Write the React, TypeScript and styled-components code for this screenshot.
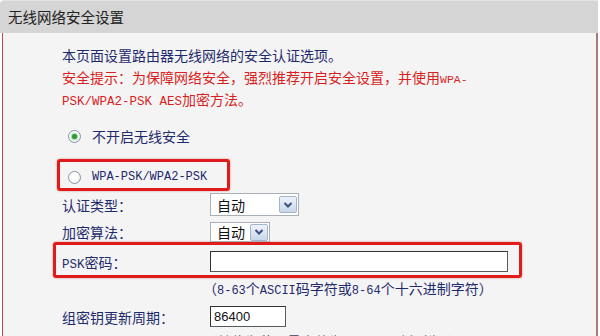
import React from "react";
import styled, { createGlobalStyle } from "styled-components";

const GlobalStyle = createGlobalStyle`
  html, body {
    margin: 0;
    padding: 0;
    background: #ffffff;
    overflow: hidden;
  }
  body {
    font-family: "Noto Sans CJK SC", "DejaVu Sans", sans-serif;
  }
`;

const Page = styled.div`
  width: 600px;
  height: 336px;
  overflow: hidden;
  background: #ffffff;
`;

const Header = styled.div`
  height: 33px;
  width: 598px;
  display: flex;
  align-items: center;
  padding-left: 8px;
  box-sizing: border-box;
  background: #d5d5d5;
  border-top: 1px solid #e4e4e4;
  border-top-left-radius: 4px;
  font-size: 14.5px;
  color: #222222;
  line-height: 1;
`;

const Body = styled.div`
  margin-left: 2px;
  width: 596px;
  box-sizing: border-box;
  min-height: 310px;
  background: #f4f4f4;
  border-left: 1px solid #c24a4a;
  border-right: 2px solid #a87a7a;
  padding: 11px 0 0 59px;
`;

const Intro = styled.div`
  font-size: 14px;
`;

const Line = styled.div<{ $red?: boolean }>`
  height: 22px;
  line-height: 22px;
  color: ${({ $red }) => ($red ? "#d81e1e" : "#1f2a6c")};
  white-space: nowrap;
`;

const Mono = styled.span<{ $size?: number }>`
  font-family: "Liberation Mono", "DejaVu Sans Mono", monospace;
  font-size: ${({ $size }) => $size ?? 12.5}px;
  line-height: 1;
`;

const RadioRow = styled.label`
  display: flex;
  align-items: center;
  height: 22px;
  gap: 11px;
  font-size: 14px;
  color: #1f2a6c;
  white-space: nowrap;
`;

const FirstRadio = styled(RadioRow)`
  margin-top: 15px;
  padding-left: 6px;
`;

const Highlight = styled.div<{ $left: number; $width: number }>`
  margin-left: -${({ $left }) => $left}px;
  width: ${({ $width }) => $width}px;
  box-sizing: border-box;
  border: 3px solid #e01b1b;
  border-radius: 3px;
  box-shadow: 0 0 2px rgba(200, 20, 20, 0.5);
`;

const RadioBox = styled(Highlight)`
  margin-top: 12px;
  height: 32px;
  padding: 4px 0 0 8px;
`;

const Radio = styled.span<{ $checked?: boolean }>`
  width: 13px;
  height: 13px;
  border-radius: 50%;
  box-sizing: border-box;
  border: 1px solid #8494a4;
  background: radial-gradient(circle at 40% 35%, #ffffff 40%, #dfe3e8 100%);
  display: flex;
  align-items: center;
  justify-content: center;
  flex-shrink: 0;

  &::after {
    content: "";
    display: ${({ $checked }) => ($checked ? "block" : "none")};
    width: 5px;
    height: 5px;
    border-radius: 50%;
    background: #2e9a34;
    box-shadow: 0 0 1px 1px #9fd49f;
  }
`;

const FormRow = styled.div<{ $top?: number }>`
  display: grid;
  grid-template-columns: 148px auto;
  align-items: center;
  margin-top: ${({ $top }) => $top ?? 0}px;
`;

const Label = styled.div`
  font-size: 14px;
  line-height: 20px;
  height: 20px;
  color: #1f2a6c;
  white-space: nowrap;
`;

const SelectBox = styled.div<{ $width: number; $height: number }>`
  width: ${({ $width }) => $width}px;
  height: ${({ $height }) => $height}px;
  box-sizing: border-box;
  background: #ffffff;
  border: 1px solid #a9b0b8;
  display: flex;
  align-items: center;
  justify-content: space-between;
  padding: 0 1px 0 6px;
  font-size: 14px;
  color: #111111;
`;

const ArrowButton = styled.span`
  width: 18px;
  height: 17px;
  box-sizing: border-box;
  border: 1px solid #a4b4cc;
  border-radius: 2px;
  background: linear-gradient(#eef3fb, #c9d7ea);
  display: flex;
  align-items: center;
  justify-content: center;
`;

const PskBox = styled(Highlight)`
  height: 36px;
  padding: 6px 0 0 6px;
`;

const TextInput = styled.div<{ $width: number }>`
  width: ${({ $width }) => $width}px;
  height: 21px;
  box-sizing: border-box;
  background: #ffffff;
  border: 1px solid #555a5e;
  border-top-color: #2f3336;
  border-left-color: #2f3336;
  font-family: "Liberation Sans", Arial, sans-serif;
  font-size: 13px;
  line-height: 19px;
  padding-left: 3px;
  color: #111111;
`;

const Hint = styled.div<{ $gray?: boolean }>`
  grid-column: 2;
  margin-left: -7px;
  height: 20px;
  line-height: 20px;
  font-size: 14px;
  color: ${({ $gray }) => ($gray ? "#3a3f6a" : "#1f2a6c")};
  white-space: nowrap;
`;

const Arrow = () => (
  <ArrowButton>
    <svg width="10" height="8" viewBox="0 0 10 8">
      <path d="M1.5 2 L5 5.5 L8.5 2" fill="none" stroke="#3d4f7c" strokeWidth="2" />
    </svg>
  </ArrowButton>
);

export default function App() {
  return (
    <Page>
      <GlobalStyle />
      <Header>无线网络安全设置</Header>
      <Body>
        <Intro>
          <Line>本页面设置路由器无线网络的安全认证选项。</Line>
          <Line $red>
            安全提示：为保障网络安全，强烈推荐开启安全设置，并使用<Mono $size={11.5}>WPA-</Mono>
          </Line>
          <Line $red>
            <Mono>PSK/WPA2-PSK AES</Mono>加密方法。
          </Line>
        </Intro>

        <FirstRadio>
          <Radio $checked />
          不开启无线安全
        </FirstRadio>

        <RadioBox $left={5} $width={173}>
          <RadioRow>
            <Radio />
            <Mono $size={12}>WPA-PSK/WPA2-PSK</Mono>
          </RadioRow>
        </RadioBox>

        <FormRow $top={2}>
          <Label>认证类型：</Label>
          <SelectBox $width={89} $height={23}>
            自动
            <Arrow />
          </SelectBox>
        </FormRow>

        <FormRow $top={6}>
          <Label>加密算法：</Label>
          <SelectBox $width={60} $height={20}>
            自动
            <Arrow />
          </SelectBox>
        </FormRow>

        <PskBox $left={9} $width={469}>
          <FormRow>
            <Label>
              <Mono>PSK</Mono>密码：
            </Label>
            <TextInput $width={298} />
          </FormRow>
        </PskBox>

        <FormRow>
          <Hint>
            （<Mono $size={12}>8-63</Mono>个<Mono $size={12}>ASCII</Mono>码字符或<Mono $size={12}>8-64</Mono>个十六进制字符）
          </Hint>
        </FormRow>

        <FormRow $top={8}>
          <Label>组密钥更新周期：</Label>
          <TextInput $width={76}>86400</TextInput>
        </FormRow>

        <FormRow $top={4}>
          <Hint $gray>
            （单位为秒，最小值为<Mono $size={12}>30</Mono>，不更新则为<Mono $size={12}>0</Mono>）
          </Hint>
        </FormRow>
      </Body>
    </Page>
  );
}
